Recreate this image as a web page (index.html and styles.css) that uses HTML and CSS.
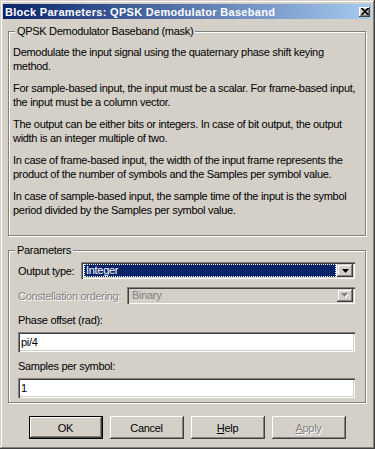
FILE: index.html
```html
<!DOCTYPE html>
<html lang="en">
  <head>
    <meta charset="UTF-8" />
    <meta name="viewport" content="width=device-width, initial-scale=1.0" />
    <title>Block Parameters: QPSK Demodulator Baseband</title>
    <link rel="stylesheet" href="styles.css">
  </head>
  <body>
    <div class="window">
      <div class="titlebar">
        <span class="title">Block Parameters: QPSK Demodulator Baseband</span>
        <span class="close">
          <svg width="8" height="7" viewBox="0 0 8 7"><path d="M0.5 0 L7.5 7 M7.5 0 L0.5 7" stroke="#000" stroke-width="1.7" fill="none"/></svg>
        </span>
      </div>

      <div class="group mask">
        <span class="legend">QPSK Demodulator Baseband (mask)</span>
        <p>Demodulate the input signal using the quaternary phase shift keying<br>method.</p>
        <p>For sample-based input, the input must be a scalar. For frame-based input,<br>the input must be a column vector.</p>
        <p>The output can be either bits or integers. In case of bit output, the output<br>width is an integer multiple of two.</p>
        <p>In case of frame-based input, the width of the input frame represents the<br>product of the number of symbols and the Samples per symbol value.</p>
        <p>In case of sample-based input, the sample time of the input is the symbol<br>period divided by the Samples per symbol value.</p>
      </div>

      <div class="group params">
        <span class="legend">Parameters</span>
        <div class="row">
          <label class="lbl-output">Output type:</label>
          <div class="combo">
            <div class="combo-value selected">Integer</div>
            <span class="combo-btn">
              <svg width="7" height="4" viewBox="0 0 7 4"><path d="M0 0h7L3.5 4z" fill="#000"/></svg>
            </span>
          </div>
        </div>
        <div class="row">
          <label class="lbl-order disabled">Constellation ordering:</label>
          <div class="combo off">
            <div class="combo-value">Binary</div>
            <span class="combo-btn">
              <svg width="8" height="5" viewBox="0 0 8 5"><path d="M1 1h7L4.5 5z" fill="#fff"/><path d="M0 0h7L3.5 4z" fill="#808080"/></svg>
            </span>
          </div>
        </div>
        <label class="field-label first">Phase offset (rad):</label>
        <input class="edit" type="text" value="pi/4">
        <label class="field-label">Samples per symbol:</label>
        <input class="edit" type="text" value="1">
      </div>

      <div class="buttons">
        <button class="btn default">OK</button>
        <button class="btn">Cancel</button>
        <button class="btn"><u>H</u>elp</button>
        <button class="btn disabled"><u>A</u>pply</button>
      </div>
    </div>
  </body>
</html>
```

FILE: styles.css
```css
html{
    box-sizing: border-box;
}

body{
    margin: 0;
    background: #d4d0c8;
}

.window{
    width: 375px;
    height: 449px;
    box-sizing: border-box;
    padding: 4px 4px 0 3px;
    background: #d4d0c8;
    box-shadow: inset -1px -1px #404040, inset 1px 1px #d4d0c8,
                inset -2px -2px #808080, inset 2px 2px #fff;
    font-family: "Liberation Sans", Arial, sans-serif;
    font-size: 11px;
    line-height: 14px;
    letter-spacing: -0.3px;
    color: #000;
}

/* title bar */
.titlebar{
    height: 15px;
    display: flex;
    align-items: center;
    justify-content: space-between;
    padding: 0 1px 0 2px;
    background: linear-gradient(to right, #0a246a, #a6caf0);
}
.title{
    color: #fff;
    font-weight: bold;
    letter-spacing: 0.3px;
}
.close{
    width: 11px;
    height: 10px;
    display: flex;
    align-items: center;
    justify-content: center;
    background: #d4d0c8;
    box-shadow: inset -1px -1px #404040, inset 1px 1px #fff,
                inset -2px -2px #808080;
}

/* group boxes */
.group{
    position: relative;
    margin: 12px 5px 0 5px;
    border: 1px solid #808080;
    box-shadow: 1px 1px 0 #fff, inset 1px 1px 0 #fff;
}
.legend{
    position: absolute;
    top: -8px;
    left: 6px;
    padding: 0 2px 0 2px;
    background: #d4d0c8;
}
.mask{
    padding: 13px 4px 18px 4px;
}
.mask p{
    margin: 0 0 8px 0;
    white-space: nowrap;
}
.mask p:last-child{
    margin-bottom: 0;
}

.params{
    margin-top: 14px;
    padding: 11px 10px 4px 9px;
}
.row{
    display: flex;
    align-items: center;
    height: 17px;
    margin-bottom: 8px;
}
.row label{
    flex: none;
}
.lbl-output{
    width: 63px;
}
.lbl-order{
    width: 109px;
}
.disabled{
    color: #808080;
    text-shadow: 1px 1px 0 #fff;
}

/* combo boxes */
.combo{
    flex: 1;
    height: 17px;
    box-sizing: border-box;
    display: flex;
    padding: 2px;
    background: #fff;
    box-shadow: inset 1px 1px #808080, inset 2px 2px #404040,
                inset -1px -1px #fff, inset -2px -2px #d4d0c8;
}
.combo-value{
    flex: 1;
    padding-left: 2px;
    line-height: 13px;
}
.combo-value.selected{
    margin: 0 1px 0 1px;
    padding-left: 1px;
    line-height: 11px;
    background: #0a246a;
    color: #fff;
    border: 1px dotted #fff;
}
.combo.off{
    background: #d4d0c8;
}
.combo.off .combo-value{
    color: #808080;
    padding-left: 3px;
}
.combo-btn{
    width: 16px;
    display: flex;
    align-items: center;
    justify-content: center;
    background: #d4d0c8;
    box-shadow: inset -1px -1px #404040, inset 1px 1px #d4d0c8,
                inset -2px -2px #808080, inset 2px 2px #fff;
}

/* edit fields */
.field-label{
    display: block;
    margin-top: 7px;
}
.field-label.first{
    margin-top: 9px;
}
.edit{
    display: block;
    width: 100%;
    height: 20px;
    box-sizing: border-box;
    margin: 5px 0 0 0;
    padding: 0 3px;
    border: none;
    outline: none;
    background: #fff;
    font-family: "Liberation Sans", Arial, sans-serif;
    font-size: 11px;
    letter-spacing: -0.3px;
    color: #000;
    box-shadow: inset 1px 1px #808080, inset 2px 2px #404040,
                inset -1px -1px #fff, inset -2px -2px #d4d0c8;
}
.edit + .field-label{
    margin-top: 7px;
}

/* buttons */
.buttons{
    display: flex;
    justify-content: center;
    gap: 7px;
    margin-top: 13px;
}
.btn{
    width: 74px;
    height: 23px;
    padding: 0;
    border: none;
    background: #d4d0c8;
    font-family: "Liberation Sans", Arial, sans-serif;
    font-size: 11px;
    letter-spacing: -0.3px;
    color: #000;
    box-shadow: inset -1px -1px #404040, inset 1px 1px #fff,
                inset -2px -2px #808080, inset 2px 2px #d4d0c8;
}
.btn.default{
    box-shadow: inset 0 0 0 1px #000, inset -2px -2px #404040, inset 2px 2px #fff,
                inset -3px -3px #808080;
}
.btn.disabled{
    color: #808080;
    text-shadow: 1px 1px 0 #fff;
}
```
